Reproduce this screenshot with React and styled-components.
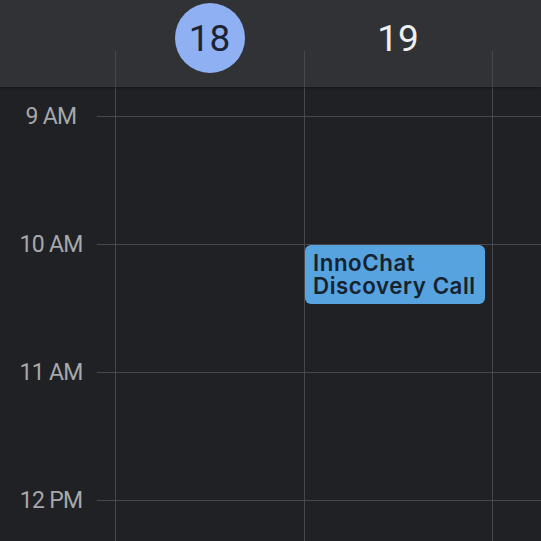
import React from "react";
import styled, { createGlobalStyle } from "styled-components";

const GlobalStyle = createGlobalStyle`
  html, body {
    margin: 0;
    padding: 0;
    background: #202124;
    overflow: hidden;
  }
  * { box-sizing: border-box; }
`;

const LINE = "#48494c";
const COLS = "97px 18px 189px 188px 1fr";

const Page = styled.div`
  width: 541px;
  height: 541px;
  overflow: hidden;
  display: flex;
  flex-direction: column;
  background: #202124;
  font-family: Roboto, "Open Sans", sans-serif;
`;

const Header = styled.header`
  flex: 0 0 87px;
  display: grid;
  grid-template-columns: ${COLS};
  background: #313235;
  box-shadow: 0 1px 3px rgba(0, 0, 0, 0.35);
  position: relative;
  z-index: 1;
`;

const HeaderDay = styled.div`
  position: relative;
  display: flex;
  justify-content: center;
  padding-top: 3px;

  &::before {
    content: "";
    position: absolute;
    left: 0;
    bottom: 0;
    width: 1px;
    height: 36px;
    background: ${LINE};
  }
`;

const DateBadge = styled.div`
  width: 70px;
  height: 70px;
  border-radius: 50%;
  display: flex;
  align-items: center;
  justify-content: center;
  font-size: 37px;
  font-weight: 400;
  color: ${(p) => (p.$today ? "#1c2434" : "#eceef0")};
  background: ${(p) => (p.$today ? "#8fb1f4" : "transparent")};
`;

const Body = styled.div`
  flex: 1;
  display: grid;
  grid-template-columns: ${COLS};
  grid-template-rows: 29px repeat(4, 128px) 1fr;
`;

const Label = styled.div`
  grid-column: 1;
  text-align: center;
  padding-left: 5px;
  font-size: 23px;
  line-height: 28px;
  margin-top: -13px;
  color: #a6a8ac;
  letter-spacing: -0.7px;
  white-space: nowrap;
`;

const Cell = styled.div`
  border-top: ${(p) => (p.$line ? `1px solid ${LINE}` : "none")};
  border-left: ${(p) => (p.$day ? `1px solid ${LINE}` : "none")};
  position: relative;
`;

const Event = styled.div`
  margin: 0 7px 0 0;
  height: 59px;
  background: #56a3df;
  border-radius: 6px;
  padding: 6px 0 0 8px;
  color: #17222e;
  font-family: Inter, "Liberation Sans", sans-serif;
  font-size: 22.3px;
  font-weight: 600;
  line-height: 23px;
  letter-spacing: 0.55px;
  white-space: nowrap;
`;

const EventLine = styled.div`
  height: 23px;
`;

const hours = ["9 AM", "10 AM", "11 AM", "12 PM"];

export default function App() {
  return (
    <Page>
      <GlobalStyle />
      <Header>
        <div />
        <div />
        <HeaderDay>
          <DateBadge $today>18</DateBadge>
        </HeaderDay>
        <HeaderDay>
          <DateBadge>19</DateBadge>
        </HeaderDay>
        <HeaderDay />
      </Header>
      <Body>
        {[0, 1, 2, 3, 4, 5].map((row) => {
          const line = row >= 1 && row <= 5;
          const hour = row >= 1 && row <= 4 ? hours[row - 1] : null;
          return (
            <React.Fragment key={row}>
              {hour ? <Label>{hour}</Label> : <div />}
              <Cell $line={line} />
              <Cell $line={line} $day />
              <Cell $line={line} $day>
                {row === 2 && (
                  <Event>
                    <EventLine>InnoChat</EventLine>
                    <EventLine>Discovery Call</EventLine>
                  </Event>
                )}
              </Cell>
              <Cell $line={line} $day />
            </React.Fragment>
          );
        })}
      </Body>
    </Page>
  );
}
